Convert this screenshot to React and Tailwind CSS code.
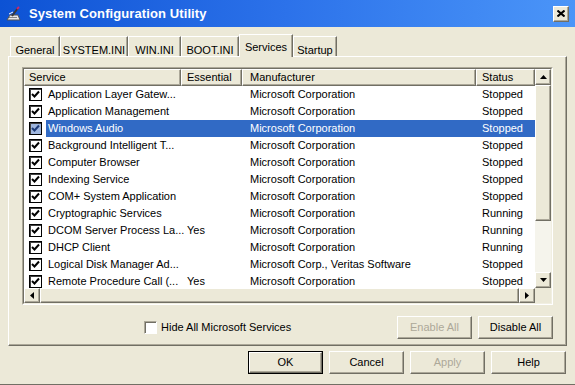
import React from 'react';

const services = [
  { name: 'Application Layer Gatew...', essential: '', maker: 'Microsoft Corporation', status: 'Stopped' },
  { name: 'Application Management', essential: '', maker: 'Microsoft Corporation', status: 'Stopped' },
  { name: 'Windows Audio', essential: '', maker: 'Microsoft Corporation', status: 'Stopped', selected: true },
  { name: 'Background Intelligent T...', essential: '', maker: 'Microsoft Corporation', status: 'Stopped' },
  { name: 'Computer Browser', essential: '', maker: 'Microsoft Corporation', status: 'Stopped' },
  { name: 'Indexing Service', essential: '', maker: 'Microsoft Corporation', status: 'Stopped' },
  { name: 'COM+ System Application', essential: '', maker: 'Microsoft Corporation', status: 'Stopped' },
  { name: 'Cryptographic Services', essential: '', maker: 'Microsoft Corporation', status: 'Running' },
  { name: 'DCOM Server Process La...', essential: 'Yes', maker: 'Microsoft Corporation', status: 'Running' },
  { name: 'DHCP Client', essential: '', maker: 'Microsoft Corporation', status: 'Running' },
  { name: 'Logical Disk Manager Ad...', essential: '', maker: 'Microsoft Corp., Veritas Software', status: 'Stopped' },
  { name: 'Remote Procedure Call (...', essential: 'Yes', maker: 'Microsoft Corporation', status: 'Stopped' },
];

const tabs = [
  { label: 'General', w: 'w-[50px]' },
  { label: 'SYSTEM.INI', w: 'w-[68px]' },
  { label: 'WIN.INI', w: 'w-[53px]' },
  { label: 'BOOT.INI', w: 'w-[58px]' },
  { label: 'Services', w: 'w-[54px]', active: true },
  { label: 'Startup', w: 'w-[44px]' },
];

// classic raised 3d edge
const raised = 'border border-t-white border-l-white border-r-[#716F64] border-b-[#716F64] shadow-[inset_-1px_-1px_0_#ACA899]';

function Check({ selected }) {
  return (
    <div
      className={`w-[13px] h-[13px] flex items-center justify-center border border-black shadow-[inset_1px_1px_0_#404040] ${
        selected ? 'bg-[#9FB6DE]' : 'bg-white'
      }`}
    >
      <svg width="9" height="9" viewBox="0 0 9 9">
        <path d="M1 4 L3.5 6.5 L8 1.5" fill="none" stroke={selected ? '#1d3b78' : '#000'} strokeWidth="2" />
      </svg>
    </div>
  );
}

function Arrow({ dir }) {
  const d = {
    up: 'M0 4 L3.5 0 L7 4 Z',
    down: 'M0 0 L3.5 4 L7 0 Z',
    left: 'M4 0 L0 3.5 L4 7 Z',
    right: 'M0 0 L4 3.5 L0 7 Z',
  }[dir];
  const vertical = dir === 'up' || dir === 'down';
  return (
    <svg width={vertical ? 7 : 4} height={vertical ? 4 : 7} viewBox={vertical ? '0 0 7 4' : '0 0 4 7'}>
      <path d={d} fill="#000" />
    </svg>
  );
}

function Button({ children, disabled, className = '' }) {
  return (
    <div className={`w-[75px] h-[23px] flex items-center justify-center bg-[#ECE9D8] ${raised} ${disabled ? 'text-[#ACA899]' : 'text-black'} ${className}`}>
      {children}
    </div>
  );
}

function TitleIcon() {
  return (
    <svg width="16" height="16" viewBox="0 0 16 16">
      <path d="M1 14 L4 9 L12 9 L14 14 Z" fill="#e8e8e8" stroke="#555" strokeWidth="1" />
      <rect x="3" y="11" width="8" height="1" fill="#888" />
      <path d="M6 10 L12 2" stroke="#3a3a3a" strokeWidth="2" />
      <path d="M11 3 L13 1" stroke="#d0246e" strokeWidth="2" />
      <path d="M3 8 L7 6" stroke="#fff" strokeWidth="1" />
    </svg>
  );
}

export default function App() {
  return (
    <div className="w-[575px] h-[385px] overflow-hidden bg-[#ECE9D8] flex flex-col font-['Liberation_Sans',Arial,sans-serif] text-[11px] text-black border-b border-b-[#716F64]">
      {/* Title bar */}
      <div className="h-[27px] shrink-0 flex items-center bg-gradient-to-r from-[#0c52d4] via-[#2c72ea] to-[#4b95f8] pl-[6px] pr-[6px]">
        <TitleIcon />
        <span className="ml-[7px] text-white font-bold text-[13px] tracking-[0.1px]">System Configuration Utility</span>
        <div className={`ml-auto w-[16px] h-[16px] flex items-center justify-center bg-[#ECE9D8] ${raised}`}>
          <svg width="8" height="7" viewBox="0 0 8 7">
            <path d="M0.5 0.5 L7.5 6.5 M7.5 0.5 L0.5 6.5" stroke="#000" strokeWidth="2" />
          </svg>
        </div>
      </div>

      <div className="flex-1 flex flex-col px-[8px] pt-[7px]">
        {/* Tabs */}
        <div className="h-[22px] flex items-end pl-[2px] relative z-10">
          {tabs.map((t) =>
            t.active ? (
              <div
                key={t.label}
                className={`${t.w} h-[23px] -mb-[1px] bg-[#ECE9D8] border-t border-l border-t-white border-l-white border-r border-r-[#716F64] shadow-[inset_-1px_0_0_#ACA899] flex justify-center pt-[4px]`}
              >
                {t.label}
              </div>
            ) : (
              <div
                key={t.label}
                className={`${t.w} h-[20px] border-t border-l border-t-white border-l-white border-r border-r-[#716F64] shadow-[inset_-1px_0_0_#ACA899] flex justify-center pt-[5px]`}
              >
                {t.label}
              </div>
            )
          )}
        </div>

        {/* Panel */}
        <div className="h-[290px] border border-t-white border-l-white border-r-[#716F64] border-b-[#716F64] shadow-[inset_-1px_-1px_0_#ACA899] pl-[13px] pt-[10px] flex flex-col">
          <div className="w-[531px] h-[238px] border border-t-[#ACA899] border-l-[#ACA899] border-r-white border-b-white">
            <div className="w-[529px] h-[236px] border border-t-[#716F64] border-l-[#716F64] border-r-[#F1EFE2] border-b-[#F1EFE2] bg-white flex flex-col">
              <div className="flex h-[219px]">
                {/* list */}
                <div className="flex-1 flex flex-col overflow-hidden">
                  <div className="h-[17px] shrink-0 flex bg-[#ECE9D8]">
                    <div className={`w-[157px] pl-[4px] flex items-center ${raised}`}>Service</div>
                    <div className={`w-[61px] pl-[5px] flex items-center ${raised}`}>Essential</div>
                    <div className={`w-[234px] pl-[7px] flex items-center ${raised}`}>Manufacturer</div>
                    <div className={`flex-1 pl-[5px] flex items-center ${raised}`}>Status</div>
                  </div>
                  {services.map((s) => (
                    <div key={s.name} className="h-[17px] shrink-0 flex items-center">
                      <div className="w-[22px] pl-[5px]">
                        <Check selected={s.selected} />
                      </div>
                      <div className={`flex-1 h-full flex items-center whitespace-nowrap ${s.selected ? 'bg-[#316AC5] text-white' : ''}`}>
                        <div className="w-[135px] pl-[2px]">{s.name}</div>
                        <div className="w-[61px] pl-[6px]">{s.essential}</div>
                        <div className="w-[234px] pl-[8px]">{s.maker}</div>
                        <div className="flex-1 pl-[6px]">{s.status}</div>
                      </div>
                    </div>
                  ))}
                </div>
                {/* vertical scrollbar */}
                <div className="w-[16px] flex flex-col bg-[#F5F4EC]">
                  <div className={`h-[16px] flex items-center justify-center bg-[#ECE9D8] ${raised}`}>
                    <Arrow dir="up" />
                  </div>
                  <div className={`h-[136px] bg-[#ECE9D8] ${raised}`} />
                  <div className="flex-1" />
                  <div className={`h-[16px] flex items-center justify-center bg-[#ECE9D8] ${raised}`}>
                    <Arrow dir="down" />
                  </div>
                </div>
              </div>
              {/* horizontal scrollbar */}
              <div className="flex-1 flex bg-[#F5F4EC]">
                <div className={`w-[16px] flex items-center justify-center bg-[#ECE9D8] ${raised}`}>
                  <Arrow dir="left" />
                </div>
                <div className={`flex-1 bg-[#ECE9D8] ${raised}`} />
                <div className={`w-[16px] flex items-center justify-center bg-[#ECE9D8] ${raised}`}>
                  <Arrow dir="right" />
                </div>
                <div className="w-[16px] bg-[#ECE9D8]" />
              </div>
            </div>
          </div>

          <div className="w-[531px] mt-[11px] flex items-center">
            <div className="ml-[122px] w-[13px] h-[13px] bg-white border border-t-[#ACA899] border-l-[#ACA899] border-r-white border-b-white shadow-[inset_1px_1px_0_#716F64]" />
            <span className="ml-[4px]">Hide All Microsoft Services</span>
            <Button disabled className="ml-auto">Enable All</Button>
            <Button className="ml-[6px]">Disable All</Button>
          </div>
        </div>

        {/* Dialog buttons */}
        <div className="mt-[5px] flex justify-end pr-[1px] gap-[6px]">
          <div className="w-[75px] h-[23px] border border-black">
            <div className={`w-full h-full flex items-center justify-center bg-[#ECE9D8] ${raised}`}>OK</div>
          </div>
          <Button>Cancel</Button>
          <Button disabled>Apply</Button>
          <Button>Help</Button>
        </div>
      </div>
    </div>
  );
}
